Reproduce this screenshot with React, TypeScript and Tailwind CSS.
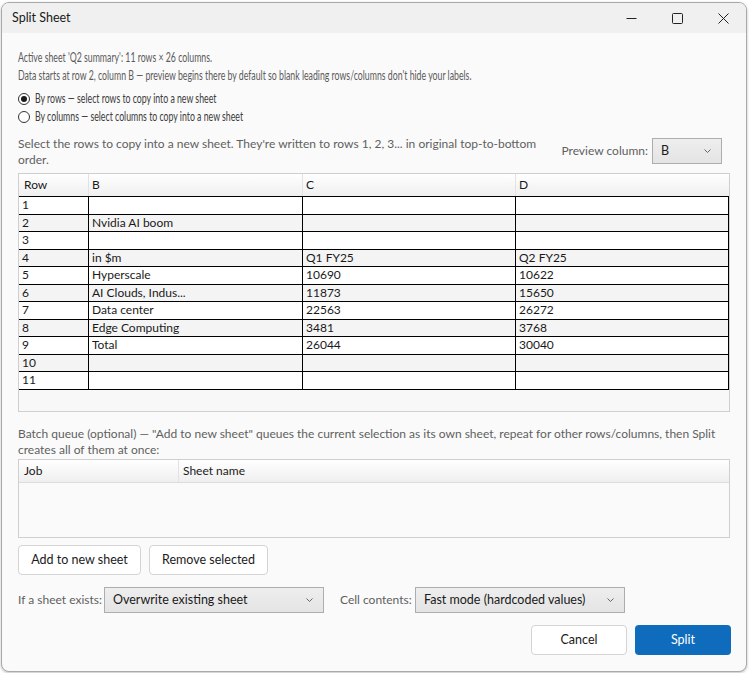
import React, { useState } from 'react'

const rows: string[][] = [
    ['1', '', '', ''],
    ['2', 'Nvidia AI boom', '', ''],
    ['3', '', '', ''],
    ['4', 'in $m', 'Q1 FY25', 'Q2 FY25'],
    ['5', 'Hyperscale', '10690', '10622'],
    ['6', 'AI Clouds, Indus...', '11873', '15650'],
    ['7', 'Data center', '22563', '26272'],
    ['8', 'Edge Computing', '3481', '3768'],
    ['9', 'Total', '26044', '30040'],
    ['10', '', '', ''],
    ['11', '', '', ''],
]

const ui = "[font-family:'Segoe_UI',Lato,sans-serif]"
// the top info lines are drawn in a narrow face in the original
const narrow = 'inline-block whitespace-nowrap scale-x-[0.7] origin-left'

function Chevron() {
    return (
        <svg width="7" height="4" viewBox="0 0 7 4" className="shrink-0">
            <path d="M0.5 0.5 L3.5 3.5 L6.5 0.5" fill="none" stroke="#666" strokeWidth="1" />
        </svg>
    )
}

function Combo({ value, className = '' }: { value: string; className?: string }) {
    return (
        <div className={`h-[26px] flex items-center justify-between pl-[8px] pr-[10px] border border-[#adadad] bg-gradient-to-b from-[#eeeeee] to-[#e4e4e4] text-[12.5px] text-[#1a1a1a] whitespace-nowrap ${className}`}>
            <span>{value}</span>
            <Chevron />
        </div>
    )
}

function Radio({ checked, label, onClick }: { checked: boolean; label: string; onClick: () => void }) {
    return (
        <div className="h-[18px] flex items-center gap-[5px] cursor-default" onClick={onClick}>
            <div className="w-[12px] h-[12px] rounded-full border border-[#333] flex items-center justify-center bg-white shrink-0">
                {checked && <div className="w-[6px] h-[6px] rounded-full bg-[#1a1a1a]" />}
            </div>
            <span className={`${narrow} text-[12.5px] text-[#3c3c3c]`}>{label}</span>
        </div>
    )
}

export default function App() {
    const [mode, setMode] = useState<'rows' | 'cols'>('rows')

    return (
        <div className={`min-h-screen bg-white ${ui}`}>
            <div className="ml-px mt-[2px] w-[746px] h-[670px] border border-[#a9a9a9] rounded-[8px] overflow-hidden bg-[#fafafa] flex flex-col shadow-[0_1px_3px_rgba(0,0,0,0.25)]">
                {/* Title bar */}
                <div className="h-[30px] shrink-0 bg-[#f0f0f0] flex items-center justify-between pl-[10px]">
                    <span className="text-[12.5px] text-[#1a1a1a]">Split Sheet</span>
                    <div className="flex items-center h-full">
                        <div className="w-[46px] h-full flex items-center justify-center">
                            <svg width="11" height="11" viewBox="0 0 11 11"><path d="M0.5 5.5 H10.5" stroke="#222" strokeWidth="1" /></svg>
                        </div>
                        <div className="w-[46px] h-full flex items-center justify-center">
                            <svg width="11" height="11" viewBox="0 0 11 11"><rect x="0.5" y="0.5" width="10" height="10" rx="1" fill="none" stroke="#222" strokeWidth="1" /></svg>
                        </div>
                        <div className="w-[46px] h-full flex items-center justify-center">
                            <svg width="11" height="11" viewBox="0 0 11 11"><path d="M0.5 0.5 L10.5 10.5 M10.5 0.5 L0.5 10.5" stroke="#222" strokeWidth="1" /></svg>
                        </div>
                    </div>
                </div>

                {/* Body */}
                <div className="flex-1 flex flex-col pl-[16px] pr-[16px] pt-[16px]">
                    <div className="text-[12.5px] leading-[18px] text-[#5a5a5a]">
                        <div><span className={narrow}>Active sheet 'Q2 summary': 11 rows × 26 columns.</span></div>
                        <div><span className={narrow}>Data starts at row 2, column B — preview begins there by default so blank leading rows/columns don't hide your labels.</span></div>
                    </div>

                    <div className="mt-[5px] flex flex-col">
                        <Radio checked={mode === 'rows'} label="By rows — select rows to copy into a new sheet" onClick={() => setMode('rows')} />
                        <Radio checked={mode === 'cols'} label="By columns — select columns to copy into a new sheet" onClick={() => setMode('cols')} />
                    </div>

                    <div className="mt-[10px] flex items-start justify-between">
                        <p className="text-[12px] leading-[16px] text-[#5f5f5f] whitespace-nowrap">
                            Select the rows to copy into a new sheet. They're written to rows 1, 2, 3... in original top-to-bottom
                            <br />
                            order.
                        </p>
                        <div className="mt-[2px] mr-[8px] flex items-center gap-[4px] shrink-0">
                            <span className="text-[12px] text-[#5f5f5f] whitespace-nowrap">Preview column:</span>
                            <Combo value="B" className="w-[70px]" />
                        </div>
                    </div>

                    {/* Preview grid */}
                    <div className="mt-[5px] h-[239px] border border-[#cfcfcf] bg-[#f8f8f8] flex flex-col">
                        <div className="h-[22px] grid grid-cols-[70px_214px_213px_213px] bg-gradient-to-b from-white to-[#efefef] text-[12px] text-[#1a1a1a]">
                            {['Row', 'B', 'C', 'D'].map((h, i) => (
                                <div key={h} className={`flex items-center ${i === 0 ? 'pl-[5px]' : 'pl-[3px]'} ${i < 3 ? 'border-r border-[#e2e2e2]' : ''}`}>{h}</div>
                            ))}
                        </div>
                        <div className="border-t border-black">
                            {rows.map((r, ri) => (
                                <div key={ri} className={`h-[17.5px] grid grid-cols-[70px_214px_213px_213px] border-b border-black text-[12px] text-[#1a1a1a] ${ri % 2 === 1 ? 'bg-[#f4f4f4]' : 'bg-white'}`}>
                                    {r.map((c, ci) => (
                                        <div key={ci} className="flex items-center pl-[3px] border-r border-black overflow-hidden whitespace-nowrap leading-none">{c}</div>
                                    ))}
                                </div>
                            ))}
                        </div>
                    </div>

                    <p className="mt-[14px] text-[12px] leading-[16px] text-[#5f5f5f] whitespace-nowrap">
                        Batch queue (optional) — "Add to new sheet" queues the current selection as its own sheet, repeat for other rows/columns, then Split
                        <br />
                        creates all of them at once:
                    </p>

                    {/* Batch queue */}
                    <div className="mt-px h-[79px] shrink-0 border border-[#cfcfcf] bg-[#fafafa] flex flex-col">
                        <div className="h-[23px] grid grid-cols-[160px_1fr] bg-gradient-to-b from-white to-[#efefef] border-b border-[#dcdcdc] text-[12px] text-[#1a1a1a]">
                            <div className="flex items-center pl-[5px] border-r border-[#e2e2e2]">Job</div>
                            <div className="flex items-center pl-[4px]">Sheet name</div>
                        </div>
                    </div>

                    <div className="mt-[7px] flex gap-[8px]">
                        <button className="w-[123px] h-[30px] rounded-[4px] border border-[#d4d4d4] bg-white text-[12.5px] text-[#1a1a1a]">Add to new sheet</button>
                        <button className="w-[119px] h-[30px] rounded-[4px] border border-[#d4d4d4] bg-white text-[12.5px] text-[#1a1a1a]">Remove selected</button>
                    </div>

                    <div className="mt-[12px] flex items-center">
                        <span className="text-[12px] text-[#5f5f5f] w-[86px] whitespace-nowrap">If a sheet exists:</span>
                        <Combo value="Overwrite existing sheet" className="w-[220px]" />
                        <span className="ml-[16px] text-[12px] text-[#5f5f5f] w-[75px] whitespace-nowrap">Cell contents:</span>
                        <Combo value="Fast mode (hardcoded values)" className="w-[210px]" />
                    </div>

                    <div className="mt-[12px] flex justify-end gap-[8px] -mr-px">
                        <button className="w-[96px] h-[30px] rounded-[4px] border border-[#d4d4d4] bg-white text-[12.5px] text-[#1a1a1a]">Cancel</button>
                        <button className="w-[96px] h-[30px] rounded-[4px] bg-[#0f6cbd] text-[12.5px] text-white">Split</button>
                    </div>
                </div>
            </div>
        </div>
    )
}
